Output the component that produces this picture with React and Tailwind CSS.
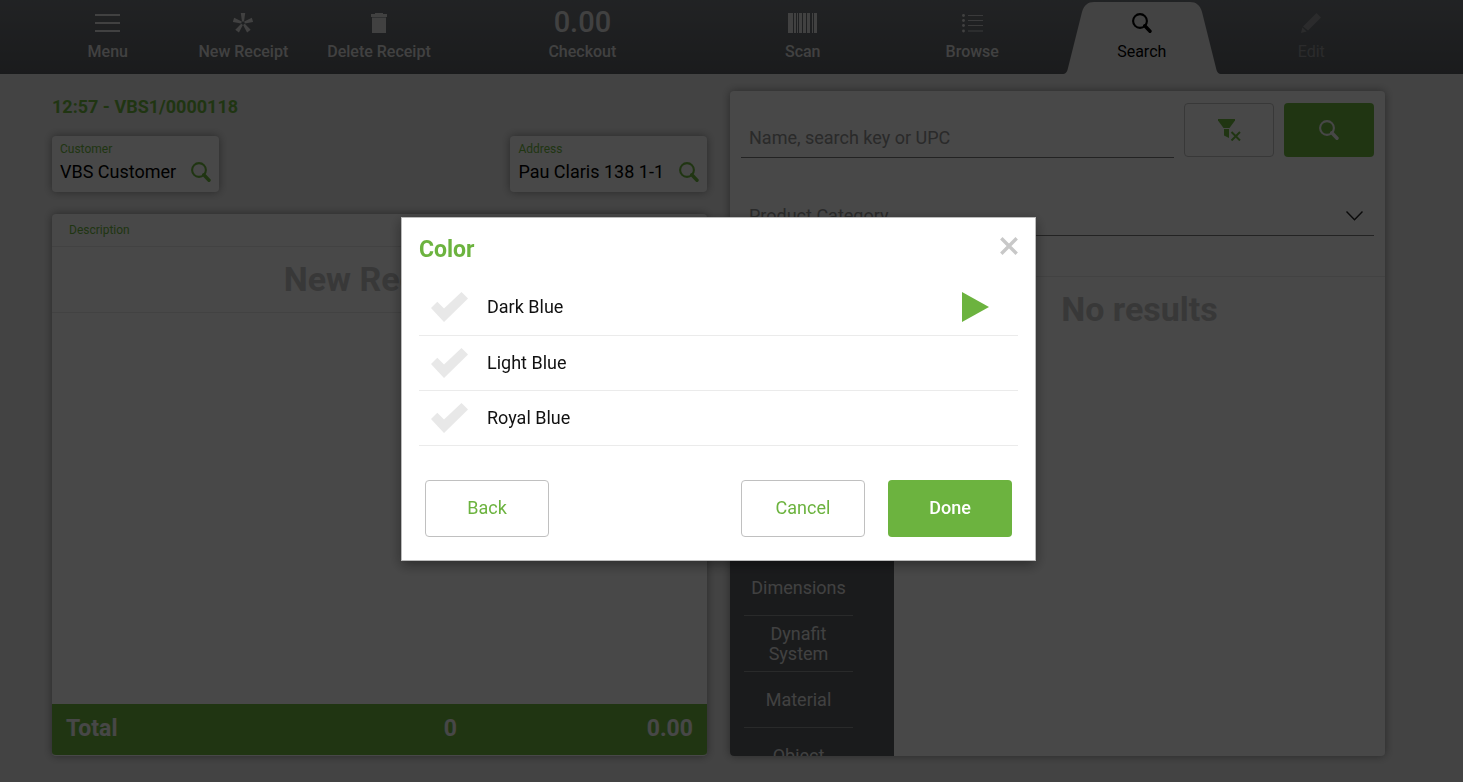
import React, { useState } from "react";

const MenuIcon = () => (
  <svg width="25" height="18" viewBox="0 0 25 18" fill="currentColor">
    <rect y="0" width="25" height="2" />
    <rect y="8" width="25" height="2" />
    <rect y="16" width="25" height="2" />
  </svg>
);

const NewIcon = () => (
  <svg width="20" height="20" viewBox="-10 -10 20 20" fill="currentColor">
    {[0, 72, 144, 216, 288].map((angle) => (
      <path
        key={angle}
        d="M-2.2 -10H2.2L1 -1.6H-1Z"
        transform={`rotate(${angle})`}
      />
    ))}
  </svg>
);

const TrashIcon = () => (
  <svg width="16" height="20" viewBox="0 0 16 20" fill="currentColor">
    <path d="M4 0H12V1H16V4H0V1H4Z" />
    <path d="M1 4.5H15V20H1Z" />
  </svg>
);

const BarcodeIcon = () => (
  <svg width="29" height="20" viewBox="0 0 29 20" fill="currentColor">
    <path d="M0 0H5V20H0ZM6 0H8V20H6ZM9 0H10V20H9ZM11 0H14V20H11ZM15 0H18V20H15ZM19 0H22V20H19ZM24 0H25V20H24ZM26 0H29V20H26Z" />
  </svg>
);

const ListIcon = () => (
  <svg width="21" height="19" viewBox="0 0 21 19" fill="currentColor">
    {[1.5, 6.5, 11.5, 17].map((y) => (
      <g key={y}>
        <circle cx="1.5" cy={y} r="1.4" />
        <rect x="6" y={y - 0.5} width="15" height="1" opacity="0.8" />
      </g>
    ))}
  </svg>
);

const PencilIcon = () => (
  <svg width="20" height="20" viewBox="0 0 20 20" fill="currentColor">
    <path d="M15.5 0L20 4.5L7 17.5L2 13.5Z" />
    <path d="M1.4 14.6L5.6 18.6L0 20Z" />
  </svg>
);

const SearchIcon = () => (
  <svg width="20" height="20" viewBox="0 0 20 20" fill="none" stroke="currentColor">
    <circle cx="8" cy="8" r="6.9" strokeWidth="2.1" />
    <path d="M12.8 12.8L18 18.2" strokeWidth="3.4" strokeLinecap="round" />
  </svg>
);

const FilterIcon = () => (
  <svg width="23" height="22" viewBox="0 0 23 22" fill="currentColor">
    <path d="M0 0H17V1.5L11.5 9H5.5L0 1.5Z" />
    <path d="M6 10H11V19L6 16.5Z" />
    <path d="M13.5 13L22 21.5M22 13L13.5 21.5" stroke="currentColor" strokeWidth="2" />
  </svg>
);

const CheckIcon = () => (
  <svg width="37" height="30" viewBox="0 0 37 30" fill="currentColor">
    <path d="M0 16L6.3 9.8L13 16.6L30.5 0L37 6.5L13 30Z" />
  </svg>
);

const TabShape = () => (
  <svg
    className="absolute bottom-0 left-1/2 -translate-x-1/2 text-[#e0e0e0]"
    width="160"
    height="72"
    viewBox="0 0 160 72"
    fill="currentColor"
  >
    <path d="M0 72C4 72 5 70 6 66L20 10C22 3 26 0 32 0H128C134 0 138 3 140 10L154 66C155 70 156 72 160 72Z" />
  </svg>
);

const leftTabs = [
  { label: "Menu", icon: <MenuIcon />, className: "flex-1" },
  { label: "New Receipt", icon: <NewIcon />, className: "flex-1" },
  { label: "Delete Receipt", icon: <TrashIcon />, className: "flex-1" },
  {
    label: "Checkout",
    icon: <span className="text-[29px]">0.00</span>,
    className: "flex-2",
  },
];

const rightTabs = [
  { label: "Scan", icon: <BarcodeIcon /> },
  { label: "Browse", icon: <ListIcon /> },
  { label: "Search", icon: <SearchIcon />, active: true },
  { label: "Edit", icon: <PencilIcon />, disabled: true },
];

const characteristics = ["Dimensions", "Dynafit System", "Material", "Object"];

const colors = [
  { name: "Dark Blue", hasChildren: true },
  { name: "Light Blue" },
  { name: "Royal Blue" },
];

function ToolbarButton({ label, icon, active, disabled, className = "flex-1" }) {
  let color = "font-medium text-[#dadada]";
  if (active) color = "text-black";
  if (disabled) color = "text-[#8f9193]";
  return (
    <button
      type="button"
      disabled={disabled}
      className={`relative flex h-full basis-0 flex-col items-center pt-2 text-[16px] ${color} ${className}`}
    >
      {active && <TabShape />}
      <span className="relative flex h-[30px] items-center">{icon}</span>
      <span className="relative mt-1 leading-5">{label}</span>
    </button>
  );
}

function Picker({ label, value }) {
  return (
    <button
      type="button"
      className="h-14 rounded bg-[#f1f1f1] px-2 text-left shadow-[0_0_8px_rgba(0,0,0,0.4)]"
    >
      <span className="block text-[12px] leading-4 text-[#6cb33f]">{label}</span>
      <span className="flex items-center gap-[15px] text-[18px] leading-[30px] text-black">
        {value}
        <span className="text-[#6cb33f]">
          <SearchIcon />
        </span>
      </span>
    </button>
  );
}

function Receipt() {
  return (
    <section className="flex flex-1 basis-0 flex-col">
      <h1 className="mt-1 text-[18px] leading-6 font-bold text-[#6cb33f]">
        12:57 - VBS1/0000118
      </h1>
      <div className="mt-[17px] flex justify-between">
        <Picker label="Customer" value="VBS Customer" />
        <Picker label="Address" value="Pau Claris 138 1-1" />
      </div>
      <div className="mt-[22px] flex flex-1 flex-col overflow-hidden rounded border-b border-[#f1f1f1] bg-[#f1f1f1] shadow-[0_0_8px_rgba(0,0,0,0.4)]">
        <div className="h-[33px] border-b border-[#dcdcdc] px-[17px] text-[12px] leading-8 text-[#6cb33f]">
          Description
        </div>
        <div className="h-[66px] border-b border-[#dcdcdc] text-center text-[34px] leading-[64px] font-bold text-[#bcbcbc]">
          New Receipt
        </div>
        <div className="flex-1" />
        <div className="grid h-[51px] grid-cols-3 items-center bg-[#6cb33f] px-[14px] pb-[2px] text-[23px] leading-6 font-bold text-[#eeeeee]">
          <span>Total</span>
          <span className="pr-[27px] text-right">0</span>
          <span className="text-right">0.00</span>
        </div>
      </div>
    </section>
  );
}

function SearchPanel() {
  return (
    <section className="flex flex-1 basis-0 flex-col overflow-hidden rounded bg-[#f1f1f1] shadow-[0_0_8px_rgba(0,0,0,0.4)]">
      <div className="flex gap-[10px] px-[11px] pt-3">
        <input
          type="text"
          aria-label="Name, search key or UPC"
          placeholder="Name, search key or UPC"
          className="h-[55px] min-w-0 flex-1 border-b border-[#777] px-2 pt-[14px] text-[18px] text-black outline-none placeholder:text-[#8c8c8c]"
        />
        <button
          type="button"
          aria-label="Clear filter"
          className="flex h-[54px] w-[90px] items-center justify-center rounded border border-[#bbb] text-[#6cb33f]"
        >
          <FilterIcon />
        </button>
        <button
          type="button"
          aria-label="Search"
          className="flex h-[54px] w-[90px] items-center justify-center rounded bg-[#6cb33f] text-[#eeeeee]"
        >
          <SearchIcon />
        </button>
      </div>
      <div className="mx-[11px] mt-[37px] flex h-[41px] items-center border-b border-[#777] pt-[2px] pr-[11px]">
        <select
          aria-label="Product Category"
          className="flex-1 appearance-none bg-transparent pl-2 text-[18px] leading-6 text-[#8c8c8c] outline-none"
        >
          <option>Product Category</option>
        </select>
        <svg width="17" height="10" viewBox="0 0 17 10" fill="none" stroke="#222" strokeWidth="1.4">
          <path d="M0.5 0.5L8.5 8.7L16.5 0.5" />
        </svg>
      </div>
      <div className="mt-10 flex min-h-0 flex-1 border-t border-[#dcdcdc]">
        <ul className="w-[164px] overflow-hidden bg-[#595c60] pt-[283px] pr-[41px] pl-[14px] text-center text-[18px] leading-5 text-[#dadada]">
          {characteristics.map((name) => (
            <li
              key={name}
              className="flex h-14 items-center justify-center border-b border-[#8a8c8e] px-4"
            >
              {name}
            </li>
          ))}
        </ul>
        <p className="flex-1 text-center text-[34px] leading-[64px] font-bold text-[#bcbcbc]">
          No results
        </p>
      </div>
    </section>
  );
}

function ColorDialog() {
  const [selected, setSelected] = useState([]);

  const toggle = (name) => {
    setSelected(
      selected.includes(name)
        ? selected.filter((item) => item !== name)
        : [...selected, name]
    );
  };

  return (
    <div
      role="dialog"
      aria-labelledby="dialog-title"
      className="w-[635px] max-w-full border border-[#bbbbbb] bg-white px-[17px] pb-[23px] shadow-[0_4px_12px_rgba(0,0,0,0.4)]"
    >
      <div className="flex h-[62px] items-center justify-between">
        <h2 id="dialog-title" className="pt-[2px] text-[23px] leading-7 font-bold text-[#6cb33f]">
          Color
        </h2>
        <button type="button" aria-label="Close" className="mb-[6px] text-[#c8c8c8]">
          <svg width="18" height="18" viewBox="0 0 18 18" fill="none" stroke="currentColor" strokeWidth="3.4">
            <path d="M1.3 1.3L16.7 16.7M16.7 1.3L1.3 16.7" />
          </svg>
        </button>
      </div>
      <ul>
        {colors.map(({ name, hasChildren }) => (
          <li
            key={name}
            className="flex h-[55px] items-center border-b border-[#ebebeb] pr-[29px] pl-3 first:h-14 first:pb-[2px]"
          >
            <label className="relative flex flex-1 items-center text-[18px] leading-6 text-[#111]">
              <input
                type="checkbox"
                checked={selected.includes(name)}
                onChange={() => toggle(name)}
                className="peer sr-only"
              />
              <span className="mr-[19px] text-[#e8e8e8] peer-checked:text-[#6cb33f]">
                <CheckIcon />
              </span>
              {name}
            </label>
            {hasChildren && (
              <button type="button" aria-label={`Expand ${name}`} className="text-[#6cb33f]">
                <svg width="27" height="30" viewBox="0 0 27 30" fill="currentColor">
                  <path d="M0 0L27 15L0 30Z" />
                </svg>
              </button>
            )}
          </li>
        ))}
      </ul>
      <div className="mt-[34px] flex gap-[23px] px-[6px] text-[18px]">
        <button
          type="button"
          className="mr-auto h-[57px] w-[124px] rounded border border-[#c0c0c0] pb-[2px] text-[#6cb33f]"
        >
          Back
        </button>
        <button
          type="button"
          className="h-[57px] w-[124px] rounded border border-[#c0c0c0] pb-[2px] text-[#6cb33f]"
        >
          Cancel
        </button>
        <button
          type="button"
          className="h-[57px] w-[124px] rounded bg-[#6cb33f] pb-[2px] font-medium text-white"
        >
          Done
        </button>
      </div>
    </div>
  );
}

export default function App() {
  return (
    <div className="flex h-screen flex-col bg-[#e0e0e0] font-['Roboto',sans-serif]">
      <header className="flex h-[74px] shrink-0 bg-linear-to-b from-[#71757a] to-[#595c60] pr-[67px] pl-10">
        <nav className="flex flex-1 basis-0">
          {leftTabs.map((tab) => (
            <ToolbarButton key={tab.label} {...tab} />
          ))}
        </nav>
        <nav className="flex flex-1 basis-0">
          {rightTabs.map((tab) => (
            <ToolbarButton key={tab.label} {...tab} />
          ))}
        </nav>
      </header>
      <main className="flex min-h-0 flex-1 gap-[23px] pt-[17px] pr-[78px] pb-[26px] pl-[52px]">
        <Receipt />
        <SearchPanel />
      </main>
      <div className="fixed inset-0 flex items-center justify-center bg-black/70 pr-[26px] pb-1">
        <ColorDialog />
      </div>
    </div>
  );
}
